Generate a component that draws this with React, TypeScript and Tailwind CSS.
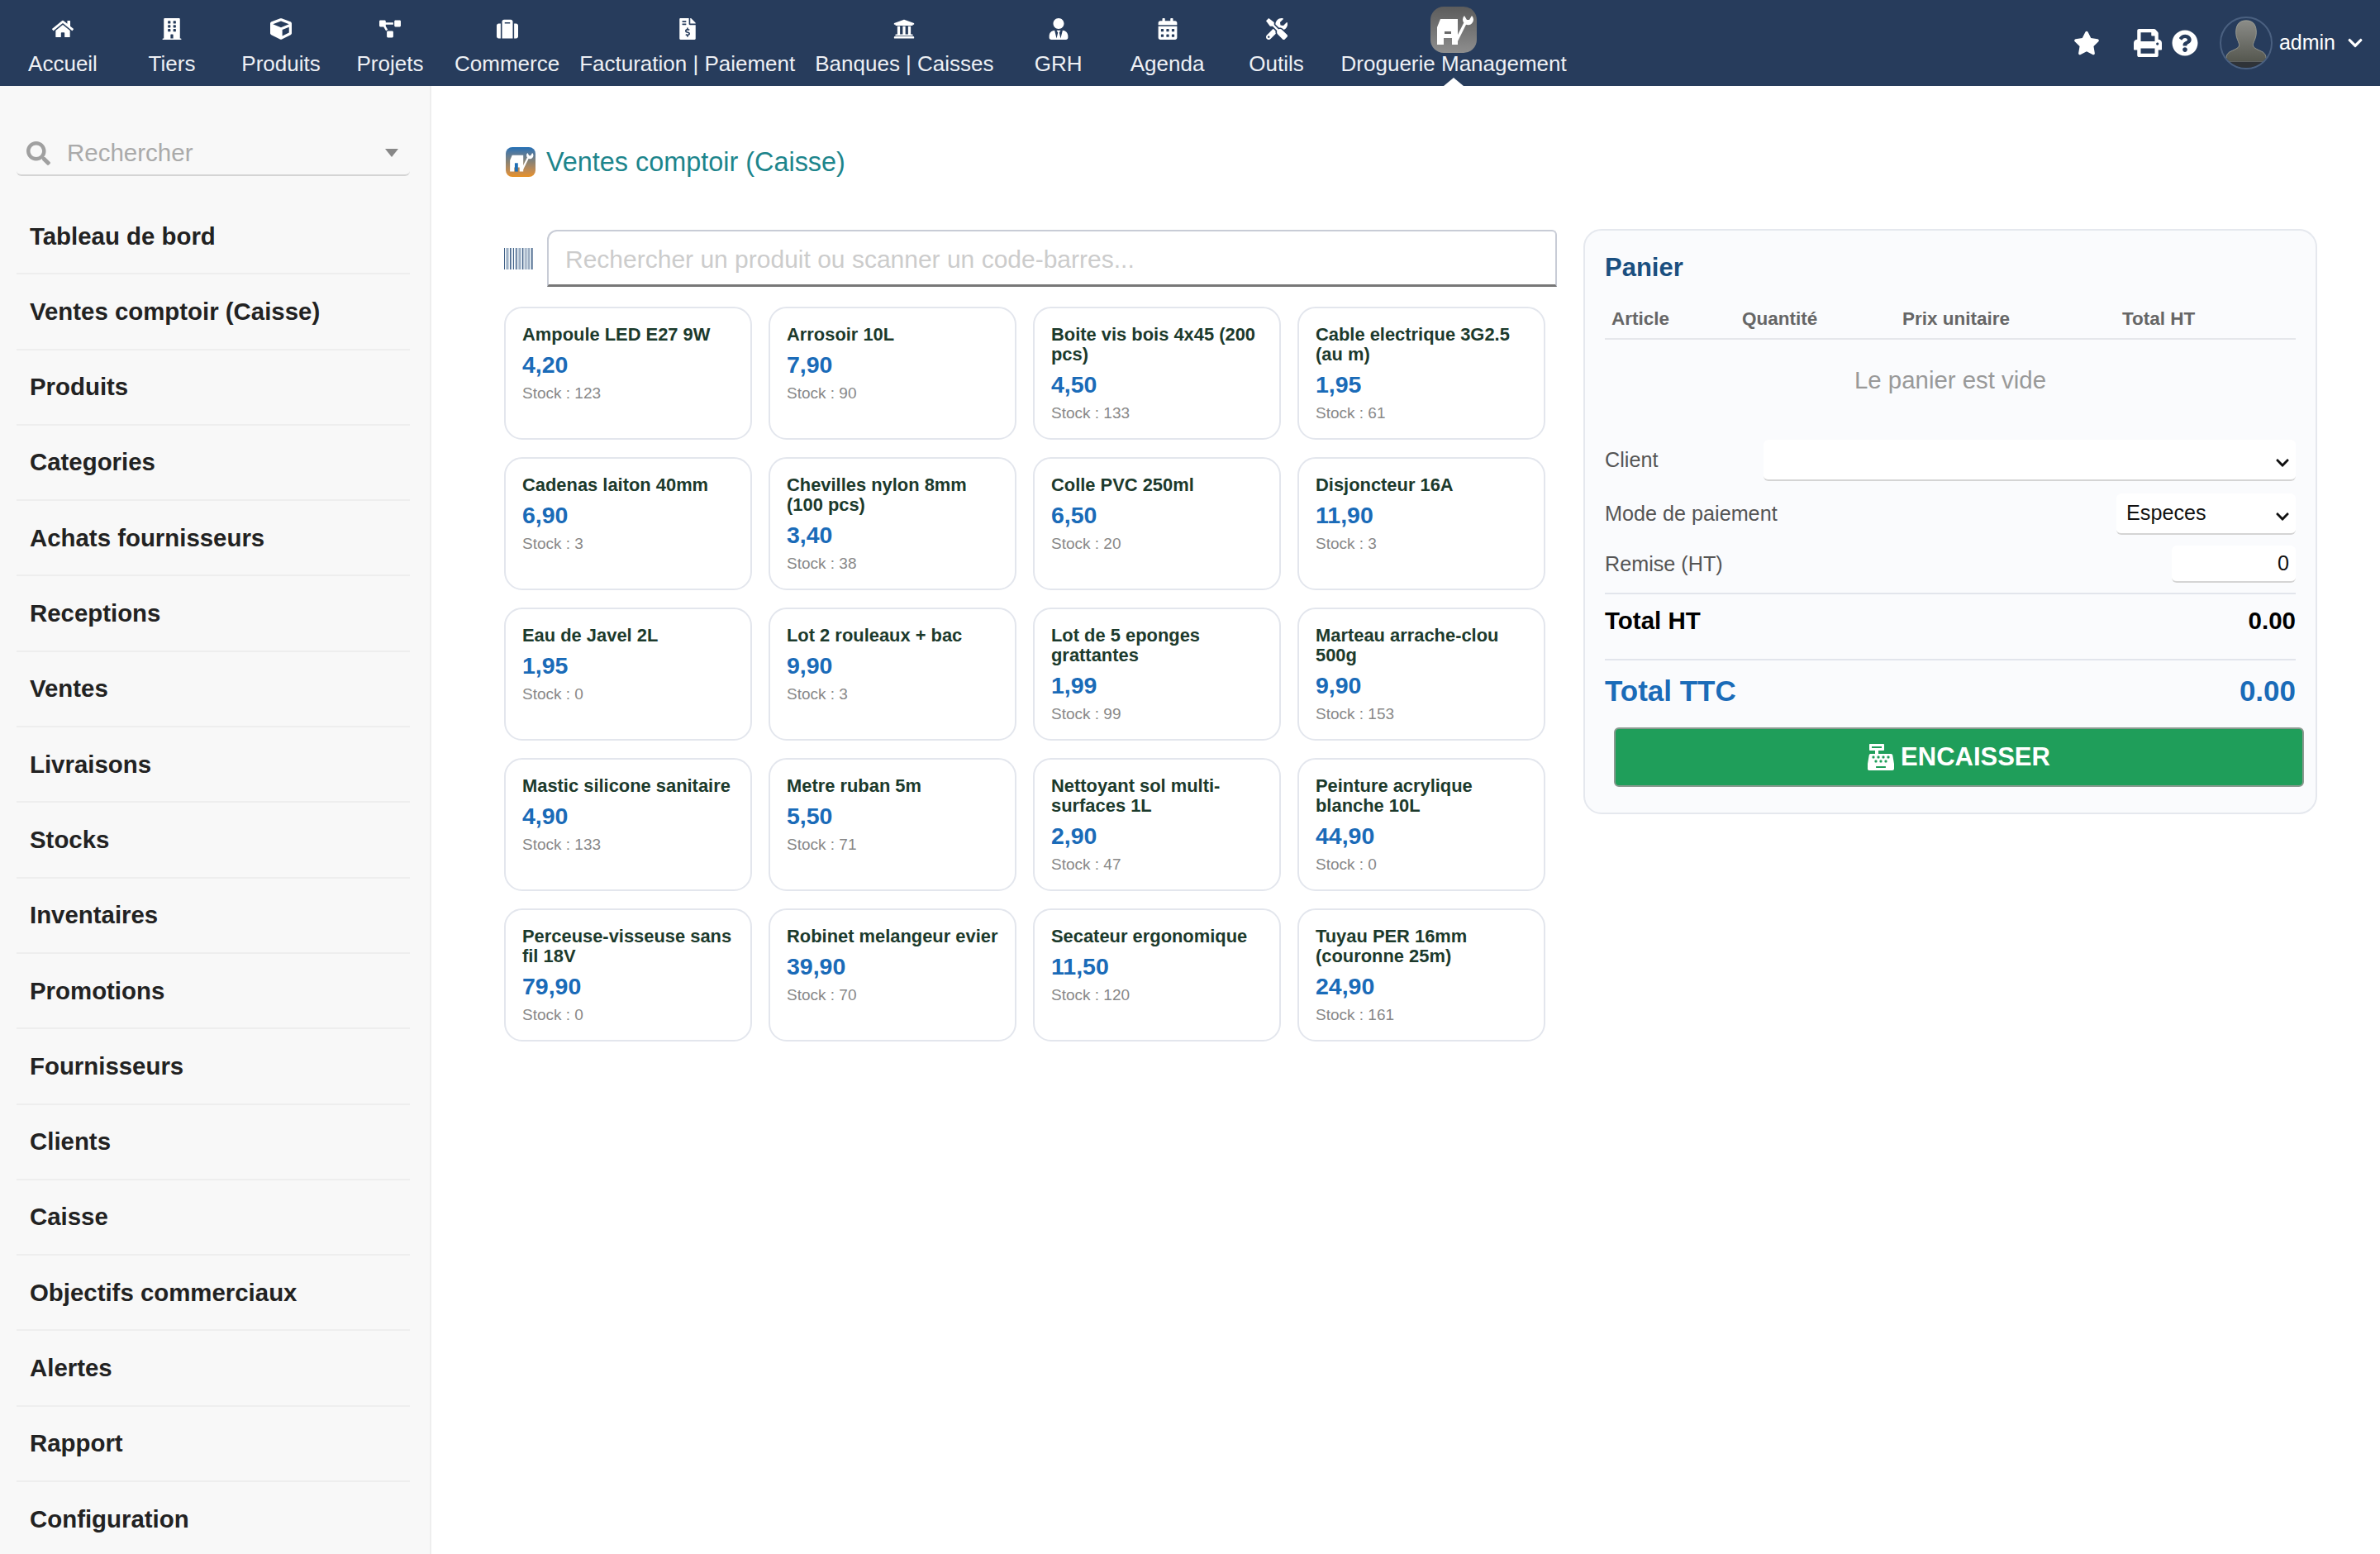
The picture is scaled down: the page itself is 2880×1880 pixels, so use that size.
import React from "react";
import {
  FaHome,
  FaBuilding,
  FaCube,
  FaProjectDiagram,
  FaSuitcase,
  FaFileInvoiceDollar,
  FaUniversity,
  FaUserTie,
  FaCalendarAlt,
  FaTools,
  FaStar,
  FaPrint,
  FaQuestionCircle,
  FaChevronDown,
  FaSearch,
  FaCashRegister,
} from "react-icons/fa";

const NAV = [
  { label: "Accueil", Icon: FaHome },
  { label: "Tiers", Icon: FaBuilding },
  { label: "Produits", Icon: FaCube },
  { label: "Projets", Icon: FaProjectDiagram },
  { label: "Commerce", Icon: FaSuitcase },
  { label: "Facturation | Paiement", Icon: FaFileInvoiceDollar },
  { label: "Banques | Caisses", Icon: FaUniversity },
  { label: "GRH", Icon: FaUserTie },
  { label: "Agenda", Icon: FaCalendarAlt },
  { label: "Outils", Icon: FaTools },
];

const SIDEBAR = [
  "Tableau de bord",
  "Ventes comptoir (Caisse)",
  "Produits",
  "Categories",
  "Achats fournisseurs",
  "Receptions",
  "Ventes",
  "Livraisons",
  "Stocks",
  "Inventaires",
  "Promotions",
  "Fournisseurs",
  "Clients",
  "Caisse",
  "Objectifs commerciaux",
  "Alertes",
  "Rapport",
  "Configuration",
];

const PRODUCTS = [
  { name: "Ampoule LED E27 9W", price: "4,20", stock: 123 },
  { name: "Arrosoir 10L", price: "7,90", stock: 90 },
  { name: "Boite vis bois 4x45 (200 pcs)", price: "4,50", stock: 133 },
  { name: "Cable electrique 3G2.5 (au m)", price: "1,95", stock: 61 },
  { name: "Cadenas laiton 40mm", price: "6,90", stock: 3 },
  { name: "Chevilles nylon 8mm (100 pcs)", price: "3,40", stock: 38 },
  { name: "Colle PVC 250ml", price: "6,50", stock: 20 },
  { name: "Disjoncteur 16A", price: "11,90", stock: 3 },
  { name: "Eau de Javel 2L", price: "1,95", stock: 0 },
  { name: "Lot 2 rouleaux + bac", price: "9,90", stock: 3 },
  { name: "Lot de 5 eponges grattantes", price: "1,99", stock: 99 },
  { name: "Marteau arrache-clou 500g", price: "9,90", stock: 153 },
  { name: "Mastic silicone sanitaire", price: "4,90", stock: 133 },
  { name: "Metre ruban 5m", price: "5,50", stock: 71 },
  { name: "Nettoyant sol multi-surfaces 1L", price: "2,90", stock: 47 },
  { name: "Peinture acrylique blanche 10L", price: "44,90", stock: 0 },
  { name: "Perceuse-visseuse sans fil 18V", price: "79,90", stock: 0 },
  { name: "Robinet melangeur evier", price: "39,90", stock: 70 },
  { name: "Secateur ergonomique", price: "11,50", stock: 120 },
  { name: "Tuyau PER 16mm (couronne 25m)", price: "24,90", stock: 161 },
];

// x, width of the barcode strokes
const BARS = [
  [0, 1], [2, 0.6], [3.5, 1], [5.5, 0.6], [7, 1.4], [9.5, 0.6], [11, 1], [13, 0.6], [14.5, 1.4], [17, 0.6],
  [18.5, 1], [20.5, 0.6], [22, 1.4], [24.5, 0.6], [26, 1], [28, 0.6], [29.5, 1], [31.5, 0.6], [33, 1.6],
];

function ShopIcon({ bar }: { bar?: boolean }) {
  return (
    <svg viewBox="0 0 56 56" className="w-full h-full">
      <path d="M8 25 L12 15 H33 V46 H26 V38 H16 V46 H8 Z" fill="#fff" />
      {bar ? (
        <rect x="17" y="30" width="6" height="16" fill="#1f6fb5" />
      ) : (
        <rect x="17" y="30" width="8" height="3" fill="#6a6a6a" />
      )}
      <path d="M31 42 L42 20" stroke="#fff" strokeWidth="3.5" />
      <path d="M41 11 A6.5 6.5 0 1 0 50 11 L47 16 L44 16 Z" fill="#fff" />
    </svg>
  );
}

function Avatar() {
  return (
    <div className="w-16 h-16 rounded-full border-2 border-[#4a6080] overflow-hidden bg-[#273c5c]">
      <svg viewBox="0 0 64 64" className="w-full h-full">
        <defs>
          <linearGradient id="head" x1="0" y1="0" x2="0" y2="1">
            <stop offset="0" stopColor="#8b8c88" />
            <stop offset="1" stopColor="#55574f" />
          </linearGradient>
        </defs>
        <path
          d="M32 3 C22 3 18 10 19 21 C20 28 23 31 23 35 C23 39 15 41 10 44 C6 47 6 52 6 56 H58 C58 52 58 47 54 44 C49 41 41 39 41 35 C41 31 44 28 45 21 C46 10 42 3 32 3 Z"
          fill="url(#head)"
          stroke="#a9a99c"
          strokeWidth="0.8"
        />
        <rect x="6" y="56" width="52" height="8" fill="#2f3338" />
      </svg>
    </div>
  );
}

function TopBar() {
  return (
    <header className="h-[104px] bg-[#273c5c] flex items-stretch pl-[10px] text-[#eef0f4] text-[26px] shrink-0">
      {NAV.map(({ label, Icon }) => (
        <div key={label} className="min-w-[132px] px-3 flex flex-col items-center">
          <div className="h-[64px] flex items-center justify-center pt-[6px]">
            <Icon className="text-[26px] text-white" />
          </div>
          <span className="leading-[26px] whitespace-nowrap">{label}</span>
        </div>
      ))}
      <div className="relative px-3 flex flex-col items-center">
        <div className="h-[64px] pt-2">
          <div className="w-14 h-14 rounded-2xl bg-gradient-to-b from-[#5c5c5c] to-[#8e8e8e]">
            <ShopIcon />
          </div>
        </div>
        <span className="leading-[26px] whitespace-nowrap">Droguerie Management</span>
        <div className="absolute bottom-0 left-1/2 -translate-x-1/2 w-0 h-0 border-x-[12px] border-x-transparent border-b-[10px] border-b-white" />
      </div>
      <div className="ml-auto flex items-center text-white pr-[20px]">
        <FaStar className="text-[32px] mr-[41px]" />
        <FaPrint className="text-[34px] mr-[12px]" />
        <FaQuestionCircle className="text-[32px] mr-[26px]" />
        <Avatar />
        <span className="ml-2 text-[25px]">admin</span>
        <FaChevronDown className="text-[20px] ml-[14px]" />
      </div>
    </header>
  );
}

function Sidebar() {
  return (
    <aside className="w-[522px] shrink-0 bg-[#f8f8f8] border-r-2 border-[#eeeeee] pl-5 pr-6 pt-[55px] overflow-hidden">
      <div className="h-[54px] flex items-center pl-3 pr-[14px] border-b-2 border-[#d4d4d4] rounded-b-md">
        <FaSearch className="text-[29px] text-[#a0a0a0]" />
        <span className="ml-[20px] text-[29.5px] text-[#aaaaaa]">Rechercher</span>
        <span className="ml-auto w-0 h-0 border-x-[8px] border-x-transparent border-t-[10px] border-t-[#888888]" />
      </div>
      <nav className="mt-[28px]">
        {SIDEBAR.map((item) => (
          <div
            key={item}
            className="h-[91.3px] flex items-center px-4 border-b-2 border-[#eeeeee] text-[29.4px] font-bold text-[#222222] whitespace-nowrap"
          >
            {item}
          </div>
        ))}
      </nav>
    </aside>
  );
}

function ProductCard({ name, price, stock }: { name: string; price: string; stock: number }) {
  return (
    <div className="h-[161px] bg-white border-2 border-[#e3e6ed] rounded-[22px] pl-[20px] pr-3 pt-[20px]">
      <div className="text-[21.9px] leading-[24px] font-bold text-[#1c3a2c]">{name}</div>
      <div className="mt-[8px] text-[28.5px] leading-[32px] font-bold text-[#1a6bb8]">{price}</div>
      <div className="mt-[7px] text-[19px] leading-[24px] text-[#888888]">Stock : {stock}</div>
    </div>
  );
}

function CartSelect({ wide, value }: { wide?: boolean; value?: string }) {
  return (
    <div className={wide ? "relative w-[644px]" : "relative w-[217px]"}>
      <select className="w-full h-[50px] appearance-none bg-white border-b-2 border-[#d4d4d4] rounded-md text-[25.2px] text-[#111111] px-3">
        {value && <option>{value}</option>}
      </select>
      <FaChevronDown className="absolute right-[7px] top-[19px] text-[18px] text-[#111111]" />
    </div>
  );
}

function Cart() {
  return (
    <section className="w-[888px] h-[708px] -mt-[1px] bg-[#fafbfd] border-2 border-[#e5e8ee] rounded-[22px] pl-6 pr-6 pt-[26px] shrink-0">
      <h2 className="text-[31px] leading-[38px] font-bold text-[#1a4f80]">Panier</h2>
      <div className="mt-[20px] h-[48px] grid grid-cols-[158px_194px_266px_1fr] items-center pl-2 border-b-2 border-[#e5e7eb] text-[22.5px] font-bold text-[#666666]">
        <span>Article</span>
        <span>Quantité</span>
        <span>Prix unitaire</span>
        <span>Total HT</span>
      </div>
      <div className="h-[100px] flex items-center justify-center text-[29.4px] text-[#999999] pb-[2px]">Le panier est vide</div>
      <div className="mt-[21px] h-[50px] flex items-center justify-between text-[25.2px] text-[#555555]">
        <span>Client</span>
        <CartSelect wide />
      </div>
      <div className="mt-[15px] h-[50px] flex items-center justify-between text-[25.2px] text-[#555555]">
        <span>Mode de paiement</span>
        <CartSelect value="Especes" />
      </div>
      <div className="mt-[13px] h-[45px] flex items-center justify-between text-[25.2px] text-[#555555]">
        <span>Remise (HT)</span>
        <input
          defaultValue="0"
          className="w-[150px] h-[45px] bg-white border-b-2 border-[#d4d4d4] rounded-md text-[25.2px] text-[#111111] text-right px-2 outline-none"
        />
      </div>
      <div className="mt-[12px] h-[82px] pb-[13px] flex items-center justify-between border-y-2 border-[#e2e5ec] text-[29.5px] font-bold text-black">
        <span>Total HT</span>
        <span>0.00</span>
      </div>
      <div className="h-[74px] flex items-center justify-between text-[35px] font-bold text-[#1a6bb8]">
        <span>Total TTC</span>
        <span>0.00</span>
      </div>
      <button className="mt-[7px] ml-[11px] w-[835px] h-[72px] flex items-center justify-center gap-[8px] bg-[#1f9e5a] border-2 border-[#8a9a90] rounded-md text-[31px] font-bold text-white">
        <FaCashRegister className="text-[32px]" />
        ENCAISSER
      </button>
    </section>
  );
}

export default function App() {
  return (
    <div className="w-[2880px] h-[1880px] flex flex-col overflow-hidden bg-white font-['Liberation_Sans',Arial,sans-serif]">
      <TopBar />
      <div className="flex flex-1 min-h-0">
        <Sidebar />
        <main className="flex-1 pl-[88px] pt-[74px]">
          <div className="h-[36px] flex items-center gap-[13px] pl-[2px]">
            <div className="w-9 h-9 rounded-lg bg-gradient-to-b from-[#1f6fb5] via-[#8a8272] to-[#e8901e] overflow-hidden">
              <ShopIcon bar />
            </div>
            <h1 className="text-[32.4px] text-[#1d858c]">Ventes comptoir (Caisse)</h1>
          </div>
          <div className="mt-[64px] flex gap-[32px] items-start">
            <div className="w-[1274px]">
              <div className="flex items-center gap-[17px]">
                <svg viewBox="0 0 35 26" className="w-[35px] h-[26px] shrink-0">
                  {BARS.map(([x, w], i) => (
                    <rect key={x} x={x} y="0" width={w} height="26" fill={i % 2 === 0 ? "#3f5f86" : "#8fb0c8"} />
                  ))}
                </svg>
                <input
                  placeholder="Rechercher un produit ou scanner un code-barres..."
                  className="flex-1 h-[69px] bg-white border-2 border-[#c8ccd6] border-b-[3px] border-b-[#777777] rounded-tl-xl rounded-tr-md px-5 pt-[3px] text-[30px] placeholder:text-[#cccccc] outline-none"
                />
              </div>
              <div className="mt-[24px] grid grid-cols-[repeat(4,300px)] gap-x-[20px] gap-y-[21px]">
                {PRODUCTS.map((p) => (
                  <ProductCard key={p.name} {...p} />
                ))}
              </div>
            </div>
            <Cart />
          </div>
        </main>
      </div>
    </div>
  );
}
